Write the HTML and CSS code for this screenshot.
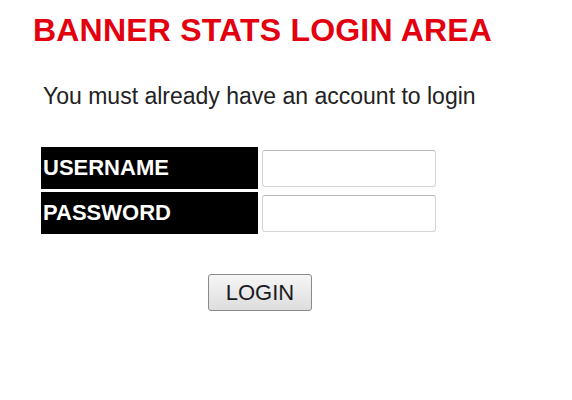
FILE: index.html
```html
<!DOCTYPE html>
<html lang="en">
<head>
    <meta charset="UTF-8">
    <title>Banner Stats Login Area</title>
    <link rel="stylesheet" href="styles.css">
</head>
<body>

    <h1 class="title">BANNER STATS LOGIN AREA</h1>

    <p class="intro">You must already have an account to login</p>

    <form class="login-form" action="#" method="post">
        <div class="fields">
            <label class="field-label" for="username">USERNAME</label>
            <div class="field-cell">
                <input type="text" id="username" name="username" class="field-input">
            </div>
            <label class="field-label" for="password">PASSWORD</label>
            <div class="field-cell">
                <input type="password" id="password" name="password" class="field-input">
            </div>
        </div>
        <div class="actions">
            <button type="submit" class="login-btn">LOGIN</button>
        </div>
    </form>

</body>
</html>
```

FILE: styles.css
```css
body {
    margin: 0;
    padding: 0;
    background-color: #fff;
    font-family: "Liberation Sans", Arial, sans-serif;
    color: #222;
}

.title {
    margin: 0;
    padding: 14px 0 0 33px;
    font-size: 32px;
    line-height: 32px;
    font-weight: bold;
    letter-spacing: 0.2px;
    color: #e3000f;
}

.intro {
    margin: 0;
    padding: 39px 0 0 43px;
    font-size: 23px;
    line-height: 23px;
}

.login-form {
    padding: 39px 0 0 41px;
}

.fields {
    display: grid;
    grid-template-columns: 217px 174px;
    column-gap: 4px;
    row-gap: 3px;
}

.field-label {
    display: flex;
    align-items: center;
    height: 42px;
    padding-left: 2px;
    background-color: #000;
    color: #fff;
    font-size: 22px;
    font-weight: bold;
}

.field-cell {
    display: flex;
    align-items: center;
}

.field-input {
    box-sizing: border-box;
    width: 174px;
    height: 37px;
    margin: 0;
    border: 1px solid #d4d4d4;
    border-top-color: #b8b8b8;
    border-radius: 3px;
    background-color: #fff;
}

.actions {
    padding: 40px 0 0 167px;
}

.login-btn {
    box-sizing: border-box;
    width: 104px;
    height: 37px;
    padding: 0;
    border: 1px solid #8a8a8a;
    border-radius: 3px;
    background: linear-gradient(#f6f6f6, #dddddd);
    color: #1a1a22;
    font-family: "Liberation Sans", Arial, sans-serif;
    font-size: 22px;
    cursor: pointer;
}
```
